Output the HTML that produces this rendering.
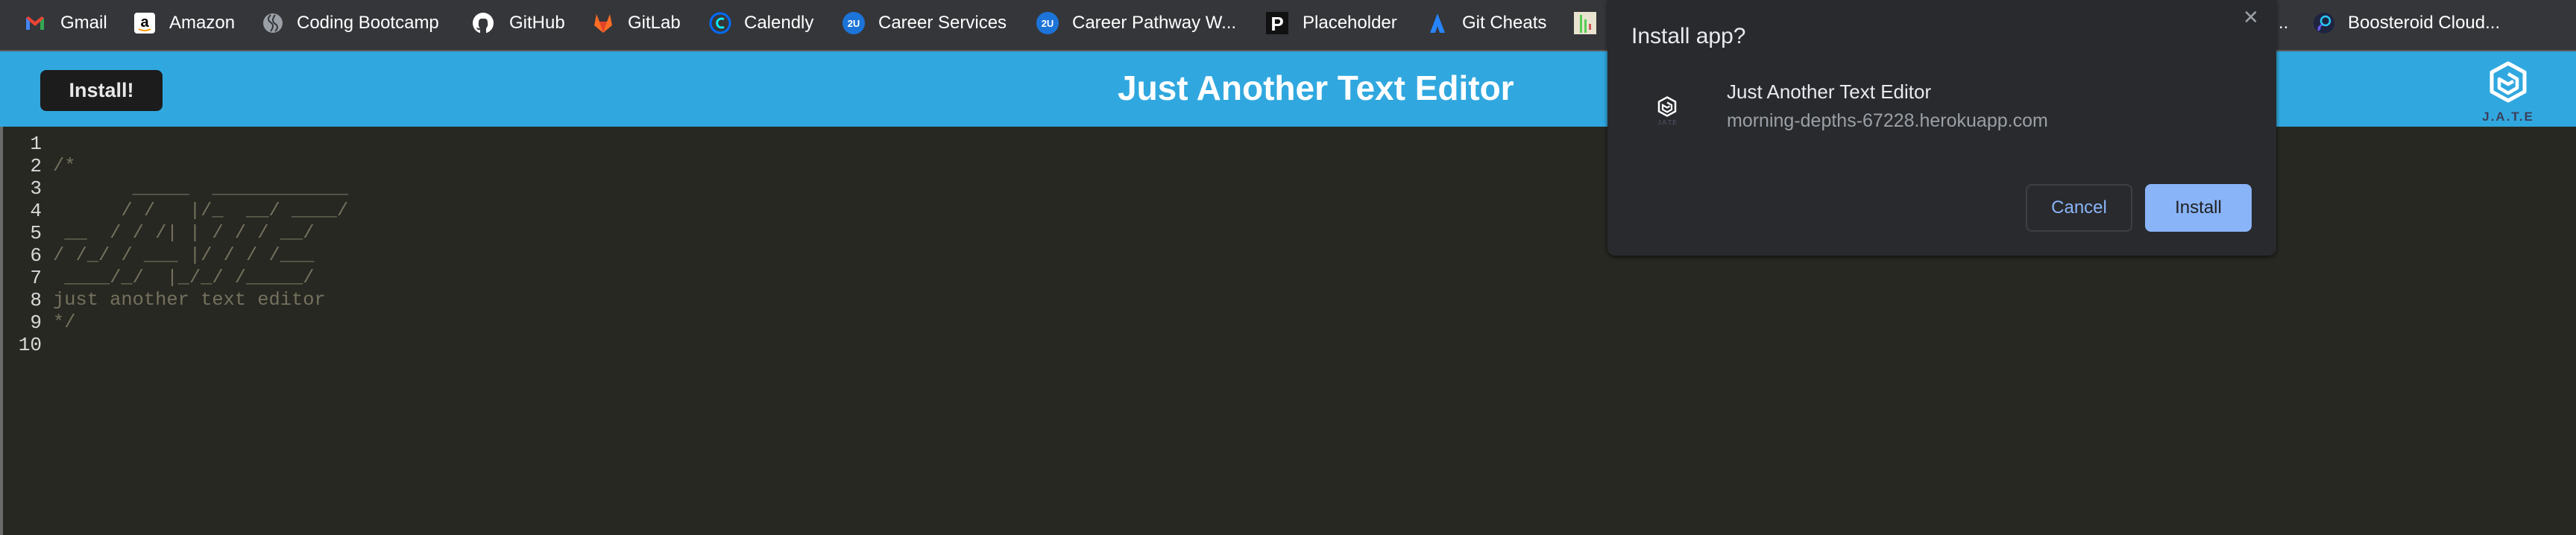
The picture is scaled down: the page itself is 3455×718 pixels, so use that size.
<!DOCTYPE html>
<html><head><meta charset="utf-8"><style>
*{margin:0;padding:0;box-sizing:border-box}
body{width:3455px;height:718px;overflow:hidden;background:#272822;position:relative;font-family:"Liberation Sans",sans-serif}
#bm{position:absolute;left:0;top:0;width:3455px;height:67px;background:#35363a}
#sep{position:absolute;left:0;top:67px;width:3455px;height:2px;background:#5b5c60}
.b{position:absolute;top:19px;font-size:24px;color:#fff;line-height:24px;white-space:nowrap}
.i{position:absolute;top:16px;width:30px;height:30px}
#hd{position:absolute;left:0;top:69px;width:3455px;height:101px;background:#30a8df}
#ed{position:absolute;left:0;top:170px;width:3455px;height:548px;background:#272822;border-left:4px solid #6b6b6b}
.ln{position:absolute;left:0;width:52px;text-align:right;color:#d8d8d8;font-family:"Liberation Mono",monospace;font-size:26px;line-height:30px}
.cd{position:absolute;left:67px;color:#75715e;font-family:"Liberation Mono",monospace;font-size:25.4px;line-height:30px;white-space:pre}
#dlg{position:absolute;left:2156px;top:0;width:897px;height:343px;background:#292a2d;border-radius:0 0 10px 10px;box-shadow:0 2px 6px rgba(0,0,0,.6)}
</style></head><body>
<div id="bm">
<svg class="i" style="left:32px" viewBox="0 0 30 30"><path d="M3 8v16h5V13l7 6 7-6v11h5V8l-3-2-9 7-9-7z" fill="#ea4335"/><path d="M3 8v16h5V13z" fill="#4285f4"/><path d="M22 13v11h5V8z" fill="#34a853"/></svg>
<div class="b" style="left:81px">Gmail</div>
<svg class="i" style="left:179px" viewBox="0 0 30 30"><rect x="1" y="1" width="28" height="28" rx="4" fill="#fff"/><text x="15" y="20" font-size="20" font-weight="bold" text-anchor="middle" fill="#000" font-family="Liberation Sans">a</text><path d="M7 23q8 4 16 0" stroke="#f90" stroke-width="2" fill="none"/></svg>
<div class="b" style="left:227px">Amazon</div>
<svg class="i" style="left:351px" viewBox="0 0 30 30"><circle cx="15" cy="15" r="13" fill="#9aa0a6"/><path d="M12 4q-6 6 0 10t0 12M18 26q6-6 0-10t0-12" stroke="#35363a" stroke-width="2" fill="none"/></svg>
<div class="b" style="left:398px">Coding Bootcamp</div>
<svg class="i" style="left:633px" viewBox="0 0 30 30"><circle cx="15" cy="15" r="14" fill="#fff"/><path d="M11 29v-5q-4 1-5-3 3 1 5 1-3-3-2-8 0-4 3-5h6q3 1 3 5 1 5-2 8v7z" fill="#35363a"/></svg>
<div class="b" style="left:683px">GitHub</div>
<svg class="i" style="left:794px" viewBox="0 0 30 30"><path d="M15 28L3 18 6 3l4 10h10l4-10 3 15z" fill="#fc6d26"/><path d="M15 28L10 13h10z" fill="#e24329"/></svg>
<div class="b" style="left:842px">GitLab</div>
<svg class="i" style="left:951px" viewBox="0 0 30 30"><circle cx="15" cy="15" r="13" fill="none" stroke="#006bff" stroke-width="3"/><path d="M20 10a6 6 0 1 0 0 10" stroke="#0ae8f0" stroke-width="3" fill="none"/></svg>
<div class="b" style="left:998px">Calendly</div>
<svg class="i" style="left:1130px" viewBox="0 0 30 30"><circle cx="15" cy="15" r="15" fill="#1c74d8"/><text x="15" y="20" font-size="13" font-weight="bold" text-anchor="middle" fill="#fff" font-family="Liberation Sans">2U</text></svg>
<div class="b" style="left:1178px">Career Services</div>
<svg class="i" style="left:1390px" viewBox="0 0 30 30"><circle cx="15" cy="15" r="15" fill="#1c74d8"/><text x="15" y="20" font-size="13" font-weight="bold" text-anchor="middle" fill="#fff" font-family="Liberation Sans">2U</text></svg>
<div class="b" style="left:1438px">Career Pathway W...</div>
<svg class="i" style="left:1698px" viewBox="0 0 30 30"><rect width="30" height="30" fill="#111"/><text x="15" y="25" font-size="26" font-weight="bold" text-anchor="middle" fill="#fff" font-family="Liberation Sans">P</text></svg>
<div class="b" style="left:1747px">Placeholder</div>
<svg class="i" style="left:1913px" viewBox="0 0 30 30"><path d="M15 2L5 28h7l3-9 3 9h7z" fill="#2684ff"/></svg>
<div class="b" style="left:1961px">Git Cheats</div>
<svg class="i" style="left:2111px" viewBox="0 0 30 30"><rect width="30" height="30" fill="#e8e4cf"/><rect x="8" y="4" width="3" height="24" fill="#5c5"/><rect x="14" y="10" width="3" height="18" fill="#5c5"/><rect x="20" y="16" width="3" height="8" fill="#c55"/></svg>
<div class="b" style="left:3056px">..</div>
<svg class="i" style="left:3102px" viewBox="0 0 30 30"><circle cx="15" cy="15" r="14" fill="#1e2440"/><circle cx="17" cy="12" r="6" fill="none" stroke="#28c8f5" stroke-width="2.5"/><path d="M12 17l-5 5M10 21l-3 4" stroke="#6a5cf5" stroke-width="2.5"/></svg>
<div class="b" style="left:3149px">Boosteroid Cloud...</div>
</div>
<div id="sep"></div>
<div id="hd">
<div style="position:absolute;left:54px;top:25px;width:164px;height:55px;background:#1c1c1c;border-radius:8px;color:#e8e8e8;font-weight:bold;font-size:27px;line-height:55px;text-align:center">Install!</div>
<div style="position:absolute;left:1499px;top:22px;color:#fff;font-weight:bold;font-size:46px;line-height:54px;white-space:nowrap">Just Another Text Editor</div>
<svg style="position:absolute;left:3336px;top:12px" width="56" height="58" viewBox="0 0 56 58"><path d="M28 4L50 16v26L28 54 6 42V16z" fill="none" stroke="#fff" stroke-width="5" stroke-linejoin="round"/><path d="M28 18l12 7v12l-12 7-12-7V25l12 7 7-4" fill="none" stroke="#fff" stroke-width="4.5" stroke-linejoin="round"/></svg>
<div style="position:absolute;left:3322px;top:78px;width:84px;text-align:center;color:#3b3f5c;font-size:17px;font-weight:bold;letter-spacing:2px;line-height:20px">J.A.T.E</div>
</div>
<div id="ed">
<div class="ln" style="top:8px">1<br>2<br>3<br>4<br>5<br>6<br>7<br>8<br>9<br>10</div>
<div class="cd" style="top:38px">/*
       _____  ____________
      / /   |/_  __/ ____/
 __  / / /| | / / / __/
/ /_/ / ___ |/ / / /___
 ____/_/  |_/_/ /_____/
just another text editor
*/</div>
</div>
<div id="dlg">
<div style="position:absolute;left:32px;top:32px;color:#e8eaed;font-size:30px;line-height:34px">Install app?</div>
<div style="position:absolute;left:852px;top:8px;color:#9aa0a6;font-size:26px">✕</div>
<svg style="position:absolute;left:66px;top:128px" width="28" height="30" viewBox="0 0 56 58"><path d="M28 4L50 16v26L28 54 6 42V16z" fill="none" stroke="#fff" stroke-width="5"/><path d="M28 18l12 7v12l-12 7-12-7V25l12 7 7-4" fill="none" stroke="#fff" stroke-width="4.5"/></svg>
<div style="position:absolute;left:60px;top:160px;width:40px;text-align:center;color:#555a70;font-size:8px">J.A.T.E</div>
<div style="position:absolute;left:160px;top:108px;color:#e8eaed;font-size:26px;line-height:30px">Just Another Text Editor</div>
<div style="position:absolute;left:160px;top:147px;color:#9aa0a6;font-size:25px;line-height:30px">morning-depths-67228.herokuapp.com</div>
<div style="position:absolute;left:561px;top:247px;width:143px;height:64px;border:2px solid #3c4043;border-radius:8px;color:#8ab4f8;font-size:24px;line-height:60px;text-align:center">Cancel</div>
<div style="position:absolute;left:721px;top:247px;width:143px;height:64px;background:#8ab4f8;border-radius:8px;color:#202124;font-size:24px;line-height:64px;text-align:center">Install</div>
</div>
</body></html>
